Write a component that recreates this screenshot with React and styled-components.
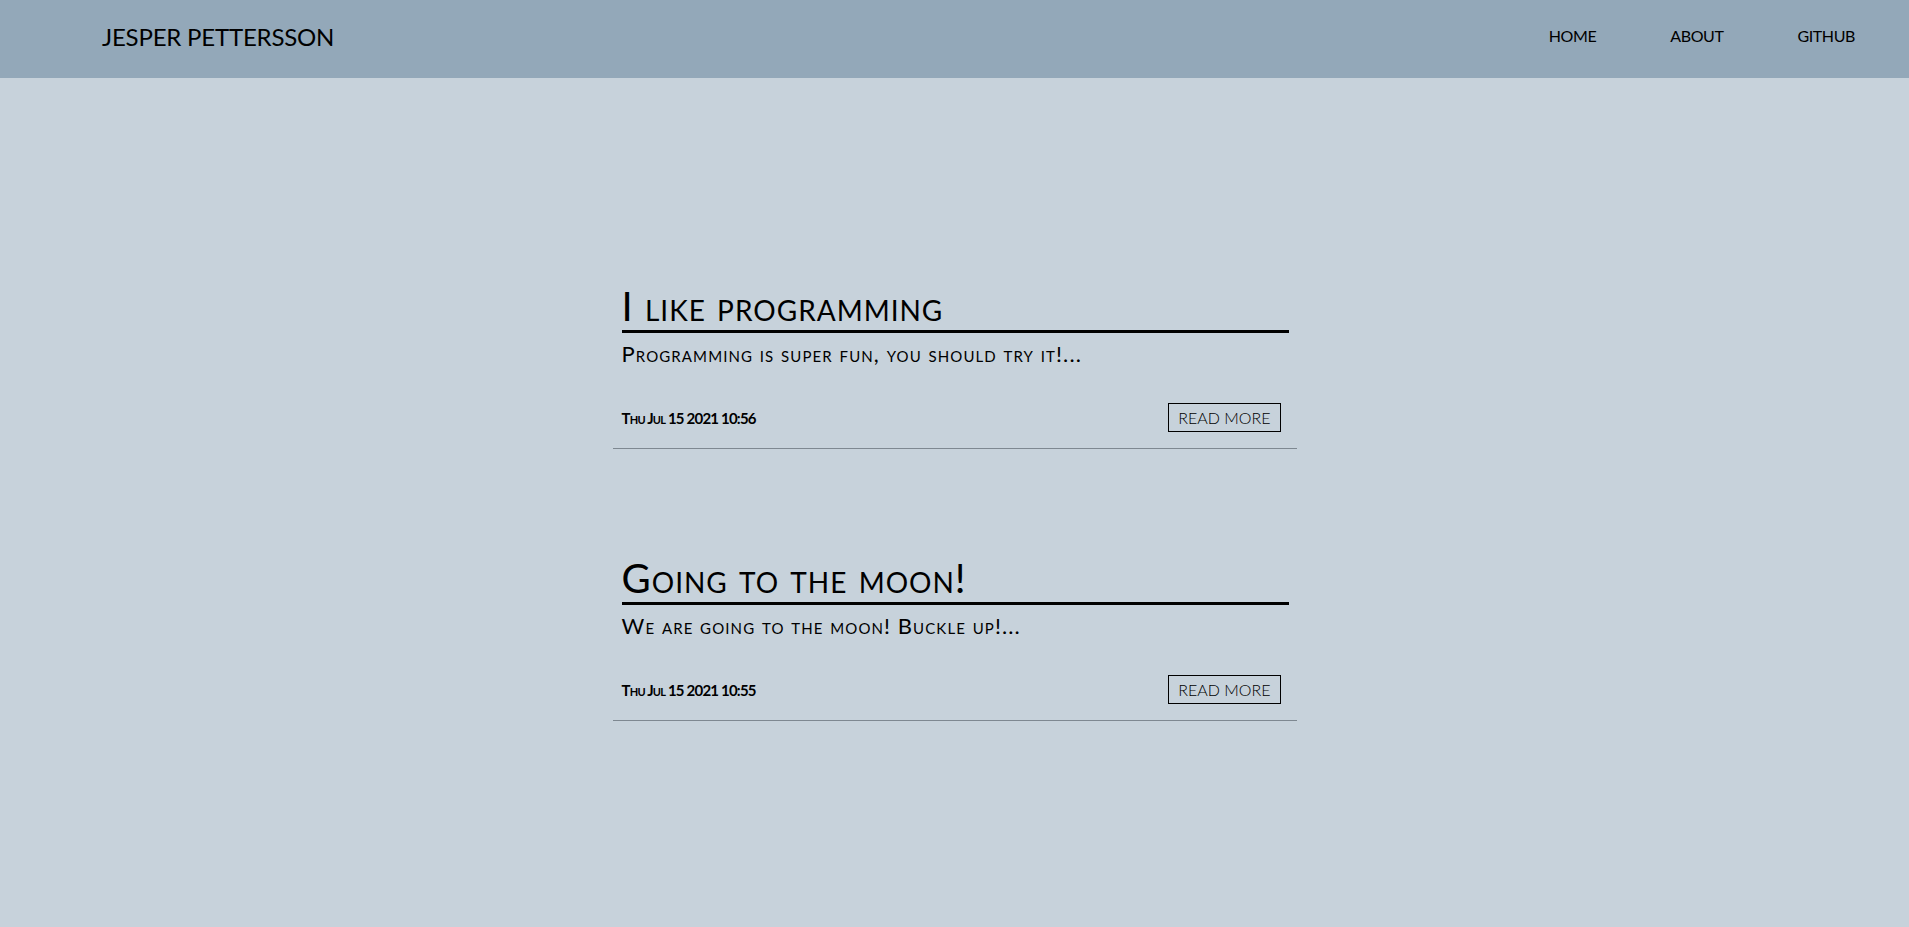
import React from 'react'
import styled, { createGlobalStyle } from 'styled-components'

const GlobalStyle = createGlobalStyle`
    html, body {
        margin: 0;
        padding: 0;
    }

    body {
        background-color: #c7d2db;
        font-family: Lato, "Open Sans", "DejaVu Sans", sans-serif;
        color: #000000;
    }
`

/* HEADER */

const Header = styled.header`
    height: 78px;
    box-sizing: border-box;
    padding: 0 54px 6px 102px;
    display: flex;
    align-items: center;
    justify-content: space-between;
    background-color: #93a8b9;
`

const Brand = styled.a`
    font-size: 24px;
    letter-spacing: -0.2px;
    color: #000000;
    text-decoration: none;
`

const Nav = styled.nav`
    display: flex;
    align-items: center;
    gap: 74px;
    margin-bottom: 2px;
`

const NavLink = styled.a`
    font-size: 16px;
    letter-spacing: -0.4px;
    color: #000000;
    text-decoration: none;
`

/* POSTS */

const Main = styled.main`
    display: flex;
    flex-direction: column;
    align-items: center;
    padding: 205px 0 60px 0;
`

const Card = styled.article`
    width: 684px;
    padding-bottom: 16px;
    margin-bottom: 106px;
    border-bottom: 1px solid #7e8891;
`

const Title = styled.h2`
    margin: 0 8px 0 9px;
    font-size: 40px;
    font-weight: 400;
    line-height: 47px;
    letter-spacing: 1px;
    font-variant: small-caps;
    border-bottom: 3px solid #000000;
`

const Excerpt = styled.p`
    margin: 9px 9px 0 9px;
    font-size: 22px;
    font-weight: 400;
    line-height: 24px;
    letter-spacing: 1.1px;
    font-variant: small-caps;
`

const Footer = styled.div`
    margin: 37px 16px 0 9px;
    display: flex;
    align-items: center;
    justify-content: space-between;
`

const Date = styled.span`
    font-size: 15px;
    font-weight: 700;
    letter-spacing: -0.8px;
    font-variant: small-caps;
`

const ReadMore = styled.button`
    height: 29px;
    padding: 0 9px;
    font-family: inherit;
    font-size: 16px;
    font-weight: 300;
    color: #000000;
    background: transparent;
    border: 1px solid #000000;
    cursor: pointer;
`

const posts = [
    {
        title: 'I like programming',
        excerpt: 'Programming is super fun, you should try it!...',
        date: 'Thu Jul 15 2021 10:56'
    },
    {
        title: 'Going to the moon!',
        excerpt: 'We are going to the moon! Buckle up!...',
        date: 'Thu Jul 15 2021 10:55'
    }
]

function App() {
    return (
        <>
            <GlobalStyle/>
            <Header>
                <Brand href="#">JESPER PETTERSSON</Brand>
                <Nav>
                    <NavLink href="#">HOME</NavLink>
                    <NavLink href="#">ABOUT</NavLink>
                    <NavLink href="#">GITHUB</NavLink>
                </Nav>
            </Header>
            <Main>
                {posts.map(post => (
                    <Card key={post.date}>
                        <Title>{post.title}</Title>
                        <Excerpt>{post.excerpt}</Excerpt>
                        <Footer>
                            <Date>{post.date}</Date>
                            <ReadMore>READ MORE</ReadMore>
                        </Footer>
                    </Card>
                ))}
            </Main>
        </>
    )
}

export default App
